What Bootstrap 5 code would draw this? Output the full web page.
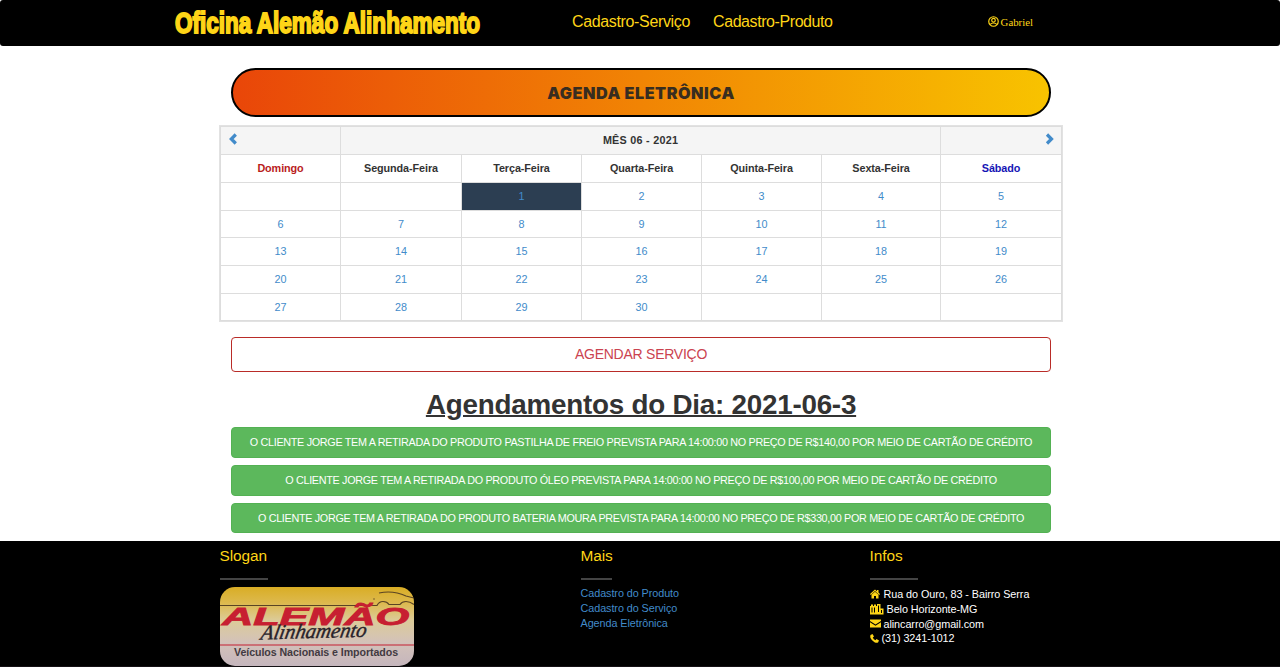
<!DOCTYPE html>
<html lang="pt-br">
<head>
<meta charset="utf-8">
<meta name="viewport" content="width=device-width, initial-scale=1">
<title>Oficina Alemão Alinhamento</title>
<link href="https://cdn.jsdelivr.net/npm/bootstrap@5.3.0/dist/css/bootstrap.min.css" rel="stylesheet">
<style>
body{font-family:"Liberation Sans",Arial,sans-serif;font-size:10.8px;line-height:15px;color:#333;background:#fff;height:667px;overflow:hidden}
a{color:#428bca;text-decoration:none}
.topbar{height:46px;background:#000;border-radius:3px;padding:0 0 0 170px;flex-wrap:nowrap;justify-content:flex-start;align-items:flex-start}
.topbar a{color:#fed517}
.brandmark{width:316px;height:46px;display:block;overflow:visible}
.menu-item{font-size:16px;line-height:18px;margin:13px 0 0 86px;white-space:nowrap;letter-spacing:-.35px}
.menu-item+.menu-item{margin-left:23px;letter-spacing:-.42px}
.user{font-family:"Liberation Serif",serif;font-size:10.8px;line-height:12px;margin:16px 0 0 155px;white-space:nowrap}
.inner{width:820px;margin-left:231px}
.agenda-title{height:49px;margin-top:22px;border:2px solid #000;border-radius:25px;background:linear-gradient(90deg,#e94609,#f18404 50%,#f8c300);font-family:Inter,sans-serif;font-size:16.2px;font-weight:900;color:#382d20;padding-top:2px;letter-spacing:.52px}
.calendar-box{width:844px;margin:8px 0 0 219px;border:1px solid #e2e2e2}
.calendar-box table{table-layout:fixed;width:841px;border-collapse:collapse;margin:0;text-align:center;font-size:10.8px}
.calendar-box th,.calendar-box td{border:1px solid #ddd;padding:0 0 1px;line-height:14px;vertical-align:middle;height:27.7px;text-align:center}
.calendar-box tr:first-child th{background:#f5f5f5;height:28px;letter-spacing:.25px}
.calendar-box tr:nth-child(2) th{height:28px;letter-spacing:-.08px}
.calendar-box svg{display:block;margin:-2px 6px 0}
.calendar-box .today{background:#2c3e52}
.calendar-box .sunday{color:#b91c1c}
.calendar-box .saturday{color:#1515b5}
.book{height:35px;margin-top:15px;border:1px solid #b92c28;border-radius:4px;color:#cb4350;font-size:14px;line-height:20px;padding:5px 0 7px;background:#fff;letter-spacing:-.25px}
.day-title{font-size:27.8px;line-height:31px;font-weight:700;text-align:center;text-decoration:underline;text-decoration-thickness:2px;margin:17px 0 7px;letter-spacing:-.23px}
.job{height:30.5px;background:#5cb85c;border:1px solid #53b153;border-radius:4px;color:#fff;font-size:10.8px;line-height:15px;padding:6px 0;margin-bottom:7.2px;white-space:nowrap;letter-spacing:-.315px}
.site-footer{height:126px;margin-top:7.7px;background:#000;color:#fff;padding:6px 0 0 219.5px;grid-template-columns:361px 289px 1fr;border-bottom:1px solid #151115;letter-spacing:-.06px}
.site-footer h2{font-size:15.4px;line-height:18px;color:#fed517;margin:0 0 13px}
.rule{height:2px;width:48px;background:#444;margin-bottom:7px}
.rule-sm{width:31px}
.logo{display:block;width:194px;height:79px;border-radius:15px}
.links{margin-top:-.6px}
.infos svg{fill:#fed517;flex:none}
.infos .line{height:14.8px;white-space:nowrap}
</style>
<script src="https://cdn.jsdelivr.net/npm/bootstrap@5.3.0/dist/js/bootstrap.bundle.min.js"></script>
</head>
<body>
<nav class="navbar topbar">
  <a href="#"><svg class="brandmark" viewBox="0 0 316 46"><text x="5" y="33" textLength="305" lengthAdjust="spacingAndGlyphs" font-family="Liberation Sans Narrow, Liberation Sans" font-weight="700" font-size="29.500" fill="#fed517" stroke="#fed517" stroke-width="1.900">Oficina Alemão Alinhamento</text></svg></a>
  <a class="menu-item" href="#">Cadastro-Serviço</a>
  <a class="menu-item" href="#">Cadastro-Produto</a>
  <a class="user d-flex" href="#"><svg width="11" height="11" viewBox="0 0 22 22" fill="none" stroke="#fed517" stroke-width="2.400" style="margin-right:2px"><circle cx="11" cy="11" r="9.5"/><circle cx="11" cy="8.5" r="3.6"/><path d="M4.5 17c2-4 11-4 13 0"/></svg>Gabriel</a>
</nav>
<main>
  <div class="inner agenda-title d-flex align-items-center justify-content-center">AGENDA ELETRÔNICA</div>
  <div class="calendar-box">
    <table>
      <colgroup><col style="width:120px"><col style="width:121px"><col style="width:120px"><col style="width:120px"><col style="width:120px"><col style="width:119px"><col style="width:121px"></colgroup>
      <tr><th><a href="#"><svg width="12" height="12" viewBox="0 0 12 12" fill="none" stroke="#428bca" stroke-width="3.200"><path d="M8.8 1.5 4.3 6l4.5 4.5"/></svg></a></th><th colspan="5">MÊS 06 - 2021</th><th><a href="#"><svg class="ms-auto" width="12" height="12" viewBox="0 0 12 12" fill="none" stroke="#428bca" stroke-width="3.200"><path d="M4 1.5 8.500 6l-4.500 4.5"/></svg></a></th></tr>
      <tr><th class="sunday">Domingo</th><th>Segunda-Feira</th><th>Terça-Feira</th><th>Quarta-Feira</th><th>Quinta-Feira</th><th>Sexta-Feira</th><th class="saturday">Sábado</th></tr>
      <tr><td></td><td></td><td class="today"><a href="#">1</a></td><td><a href="#">2</a></td><td><a href="#">3</a></td><td><a href="#">4</a></td><td><a href="#">5</a></td></tr>
      <tr><td><a href="#">6</a></td><td><a href="#">7</a></td><td><a href="#">8</a></td><td><a href="#">9</a></td><td><a href="#">10</a></td><td><a href="#">11</a></td><td><a href="#">12</a></td></tr>
      <tr><td><a href="#">13</a></td><td><a href="#">14</a></td><td><a href="#">15</a></td><td><a href="#">16</a></td><td><a href="#">17</a></td><td><a href="#">18</a></td><td><a href="#">19</a></td></tr>
      <tr><td><a href="#">20</a></td><td><a href="#">21</a></td><td><a href="#">22</a></td><td><a href="#">23</a></td><td><a href="#">24</a></td><td><a href="#">25</a></td><td><a href="#">26</a></td></tr>
      <tr><td><a href="#">27</a></td><td><a href="#">28</a></td><td><a href="#">29</a></td><td><a href="#">30</a></td><td></td><td></td><td></td></tr>
    </table>
  </div>
  <div class="inner">
    <button class="btn book d-block w-100">AGENDAR SERVIÇO</button>
    <h1 class="day-title">Agendamentos do Dia: 2021-06-3</h1>
    <button class="btn job d-block w-100">O CLIENTE JORGE TEM A RETIRADA DO PRODUTO PASTILHA DE FREIO PREVISTA PARA 14:00:00 NO PREÇO DE R$140,00 POR MEIO DE CARTÃO DE CRÉDITO</button>
    <button class="btn job d-block w-100">O CLIENTE JORGE TEM A RETIRADA DO PRODUTO ÓLEO PREVISTA PARA 14:00:00 NO PREÇO DE R$100,00 POR MEIO DE CARTÃO DE CRÉDITO</button>
    <button class="btn job d-block w-100 mb-0">O CLIENTE JORGE TEM A RETIRADA DO PRODUTO BATERIA MOURA PREVISTA PARA 14:00:00 NO PREÇO DE R$330,00 POR MEIO DE CARTÃO DE CRÉDITO</button>
  </div>
</main>
<footer class="site-footer d-grid">
  <div>
    <h2>Slogan</h2><div class="rule"></div>
    <svg class="logo" viewBox="0 0 194 79">
      <defs><linearGradient id="sky" x2="0" y2="1"><stop stop-color="#d9ad25"/><stop offset=".2" stop-color="#ddb94d"/><stop offset=".42" stop-color="#dccb98"/><stop offset=".7" stop-color="#d3c2b9"/><stop offset="1" stop-color="#c5b6bd"/></linearGradient></defs>
      <rect width="194" height="79" fill="url(#sky)"/>
      <path d="M0 18.5H157q2-4 6-4t6 3h11q2-3 6-3t8 3M159 6q14-3 27 3l8 2" fill="none" stroke="#5a4424" stroke-width="1.2"/>
      <circle cx="154" cy="12" r=".7" fill="#5a4424"/>
      <text x="2" y="37.500" textLength="187" lengthAdjust="spacingAndGlyphs" font-family="Liberation Sans" font-weight="700" font-style="italic" font-size="23.500" fill="#c71f31" stroke="#c71f31" stroke-width=".8">ALEMÃO</text>
      <g transform="translate(40 52.500) skewX(-12) rotate(-1.500)"><text textLength="105" lengthAdjust="spacingAndGlyphs" font-family="Liberation Serif" font-style="italic" font-size="21" fill="#29232a" stroke="#29232a" stroke-width=".4">Alinhamento</text></g>
      <path d="M0 58h194" stroke="#c8545f" stroke-width="1.5"/>
      <text x="14" y="69" textLength="164" lengthAdjust="spacingAndGlyphs" font-family="Liberation Sans" font-weight="700" font-size="10" fill="#423a42">Veículos Nacionais e Importados</text>
    </svg>
  </div>
  <div>
    <h2>Mais</h2><div class="rule rule-sm"></div>
    <div class="links"><a class="d-block" href="#">Cadastro do Produto</a><a class="d-block" href="#">Cadastro do Serviço</a><a class="d-block" href="#">Agenda Eletrônica</a></div>
  </div>
  <div class="infos">
    <h2>Infos</h2><div class="rule"></div>
    <div class="line d-flex align-items-center"><svg width="10" height="10" viewBox="0 0 20 20" style="margin-right:4px"><path d="M0 10 10 1l4 3.5V2h3v5l3 3-1.500 2L10 4 1.5 12zM3 11.500l7-6 7 6V19h-5v-5H8v5H3z"/></svg>Rua do Ouro, 83 - Bairro Serra</div>
    <div class="line d-flex align-items-center"><svg width="14" height="11" viewBox="0 0 28 22" style="margin-right:3px"><path fill-rule="evenodd" d="M0 4h2V1h4v3h2v-3h4v3h2V0h7v9h6v12H0zM3 7v10h2V7zm5 0v10h2V7zm8-4v13h2V3zm6 9v6h2v-6z"/></svg>Belo Horizonte-MG</div>
    <div class="line d-flex align-items-center"><svg width="11" height="9" viewBox="0 0 22 18" style="margin-right:3px"><path d="M0 1h22v3L11 11 0 4zM0 6.500 11 13.500 22 6.500V17H0z"/></svg>alincarro@gmail.com</div>
    <div class="line d-flex align-items-center"><svg width="9" height="9" viewBox="0 0 18 18" style="margin-right:3px"><path d="M1 2 5 0l3 5-2.500 2q1.500 4 5.500 5.500l2-2.500 5 3-2 4q-3 1.500-7-.5Q3 13 1 8 0 5 1 2z"/></svg>(31) 3241-1012</div>
  </div>
</footer>
</body>
</html>
